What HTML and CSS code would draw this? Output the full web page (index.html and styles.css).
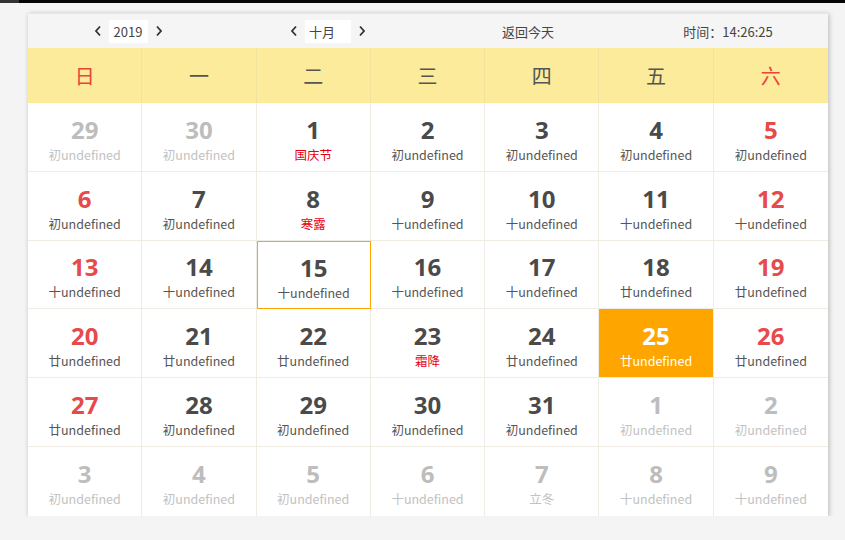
FILE: index.html
```html
<!DOCTYPE html>
<html lang="zh">
<head>
<meta charset="utf-8">
<title>日历</title>
<link rel="stylesheet" href="styles.css">
</head>
<body>
<div class="topbar"><div class="topbar-tab"></div></div>
<div class="calendar">
  <div class="toolbar">
    <div class="tool">
      <span class="arrow"><svg width="8" height="12" viewBox="0 0 8 12"><polyline points="6,1.5 2,6 6,10.5" fill="none" stroke="#333" stroke-width="1.8"/></svg></span>
      <span class="field year">2019</span>
      <span class="arrow"><svg width="8" height="12" viewBox="0 0 8 12"><polyline points="2,1.5 6,6 2,10.5" fill="none" stroke="#333" stroke-width="1.8"/></svg></span>
    </div>
    <div class="tool">
      <span class="arrow"><svg width="8" height="12" viewBox="0 0 8 12"><polyline points="6,1.5 2,6 6,10.5" fill="none" stroke="#333" stroke-width="1.8"/></svg></span>
      <span class="field month">十月</span>
      <span class="arrow"><svg width="8" height="12" viewBox="0 0 8 12"><polyline points="2,1.5 6,6 2,10.5" fill="none" stroke="#333" stroke-width="1.8"/></svg></span>
    </div>
    <div class="tool">返回今天</div>
    <div class="tool">时间：14:26:25</div>
  </div>
  <div class="weekdays">
    <div class="wd red">日</div><div class="wd">一</div><div class="wd">二</div><div class="wd">三</div><div class="wd">四</div><div class="wd">五</div><div class="wd red">六</div>
  </div>
  <div class="days">
    <div class="day other"><b>29</b><span>初undefined</span></div>
    <div class="day other"><b>30</b><span>初undefined</span></div>
    <div class="day"><b>1</b><span class="fest">国庆节</span></div>
    <div class="day"><b>2</b><span>初undefined</span></div>
    <div class="day"><b>3</b><span>初undefined</span></div>
    <div class="day"><b>4</b><span>初undefined</span></div>
    <div class="day weekend"><b>5</b><span>初undefined</span></div>

    <div class="day weekend"><b>6</b><span>初undefined</span></div>
    <div class="day"><b>7</b><span>初undefined</span></div>
    <div class="day"><b>8</b><span class="fest">寒露</span></div>
    <div class="day"><b>9</b><span>十undefined</span></div>
    <div class="day"><b>10</b><span>十undefined</span></div>
    <div class="day"><b>11</b><span>十undefined</span></div>
    <div class="day weekend"><b>12</b><span>十undefined</span></div>

    <div class="day weekend"><b>13</b><span>十undefined</span></div>
    <div class="day"><b>14</b><span>十undefined</span></div>
    <div class="day selected"><b>15</b><span>十undefined</span></div>
    <div class="day"><b>16</b><span>十undefined</span></div>
    <div class="day"><b>17</b><span>十undefined</span></div>
    <div class="day"><b>18</b><span>廿undefined</span></div>
    <div class="day weekend"><b>19</b><span>廿undefined</span></div>

    <div class="day weekend"><b>20</b><span>廿undefined</span></div>
    <div class="day"><b>21</b><span>廿undefined</span></div>
    <div class="day"><b>22</b><span>廿undefined</span></div>
    <div class="day"><b>23</b><span class="fest">霜降</span></div>
    <div class="day"><b>24</b><span>廿undefined</span></div>
    <div class="day today"><b>25</b><span>廿undefined</span></div>
    <div class="day weekend"><b>26</b><span>廿undefined</span></div>

    <div class="day weekend"><b>27</b><span>廿undefined</span></div>
    <div class="day"><b>28</b><span>初undefined</span></div>
    <div class="day"><b>29</b><span>初undefined</span></div>
    <div class="day"><b>30</b><span>初undefined</span></div>
    <div class="day"><b>31</b><span>初undefined</span></div>
    <div class="day other"><b>1</b><span>初undefined</span></div>
    <div class="day other"><b>2</b><span>初undefined</span></div>

    <div class="day other"><b>3</b><span>初undefined</span></div>
    <div class="day other"><b>4</b><span>初undefined</span></div>
    <div class="day other"><b>5</b><span>初undefined</span></div>
    <div class="day other"><b>6</b><span>十undefined</span></div>
    <div class="day other"><b>7</b><span>立冬</span></div>
    <div class="day other"><b>8</b><span>十undefined</span></div>
    <div class="day other"><b>9</b><span>十undefined</span></div>
  </div>
</div>
</body>
</html>
```
FILE: styles.css
```css
html, body {
  margin: 0;
  padding: 0;
  background: #f4f4f4;
  font-family: "Noto Sans CJK SC", "Open Sans", sans-serif;
  color: #555;
}
.topbar {
  height: 3px;
  background: #050505;
}
.topbar-tab {
  width: 19px;
  height: 3px;
  background: #333;
}
.calendar {
  width: 800px;
  margin: 10px 0 0 28px;
  background: #fff;
  box-shadow: 1px 1px 5px rgba(0, 0, 0, 0.25);
}
.toolbar {
  display: flex;
  height: 35px;
  background: #f5f5f5;
  border-top: 1px solid #e6e6e6;
  box-sizing: border-box;
}
.tool {
  flex: 1;
  display: flex;
  align-items: center;
  justify-content: center;
  font-size: 13px;
  color: #444;
}
.arrow {
  display: flex;
  align-items: center;
  padding: 0 7px;
}
.field {
  background: #fff;
  height: 23px;
  line-height: 23px;
  box-sizing: border-box;
}
.year {
  width: 39px;
  text-align: center;
}
.month {
  width: 46px;
  padding-left: 4px;
}
.weekdays {
  display: grid;
  grid-template-columns: repeat(7, 1fr);
  height: 55px;
  background: #fbeb9b;
}
.wd {
  display: flex;
  align-items: center;
  justify-content: center;
  font-size: 20px;
  color: #555;
  border-right: 1px solid #f0e3a0;
}
.wd:last-child { border-right: 0; }
.wd.red { color: #e8453c; }
.days {
  display: grid;
  grid-template-columns: repeat(7, 1fr);
  grid-auto-rows: 68.8px;
}
.day {
  display: flex;
  flex-direction: column;
  align-items: center;
  justify-content: center;
  padding-top: 5px;
  border-right: 1px solid #f0ebe3;
  border-bottom: 1px solid #f0ebe3;
  box-sizing: border-box;
}
.day:nth-child(7n) { border-right: 0; }
.day:nth-last-child(-n+7) { border-bottom: 0; }
.day b {
  font-size: 24px;
  line-height: 28px;
  font-weight: bold;
  color: #4a4a4a;
  font-family: "Open Sans", "Noto Sans CJK SC", sans-serif;
}
.day span {
  font-size: 12.5px;
  line-height: 16px;
  margin-top: 3px;
  color: #555;
}
.day span.fest { color: #e60012; }
.day.weekend b { color: #e64a4a; }
.day.other b { color: #bdbdbd; }
.day.other span { color: #c2c2c2; }
.day.selected { border: 1px solid #ffa500; }
.day.today { background: #ffa500; }
.day.today b, .day.today span { color: #fff; }
```
